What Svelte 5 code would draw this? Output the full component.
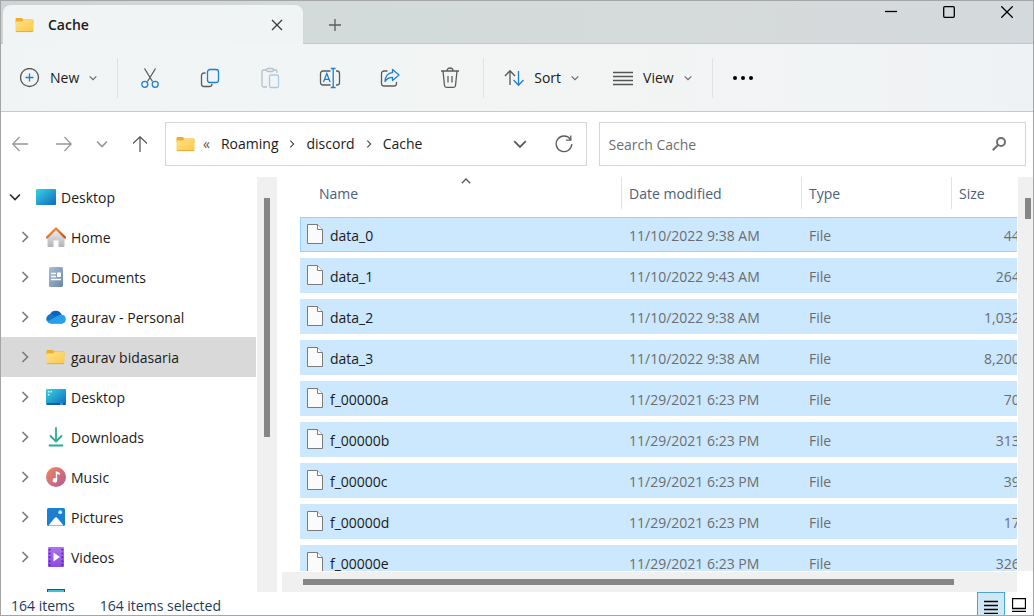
<script lang="ts">
  interface TreeItem {
    label: string
    icon: string
    selected?: boolean
  }

  interface FileEntry {
    name: string
    modified: string
    size: string
  }

  const children: TreeItem[] = [
    { label: 'Home', icon: 'home' },
    { label: 'Documents', icon: 'documents' },
    { label: 'gaurav - Personal', icon: 'cloud' },
    { label: 'gaurav bidasaria', icon: 'folder', selected: true },
    { label: 'Desktop', icon: 'desktop' },
    { label: 'Downloads', icon: 'downloads' },
    { label: 'Music', icon: 'music' },
    { label: 'Pictures', icon: 'pictures' },
    { label: 'Videos', icon: 'videos' },
  ]

  const files: FileEntry[] = [
    { name: 'data_0', modified: '11/10/2022 9:38 AM', size: '44 KB' },
    { name: 'data_1', modified: '11/10/2022 9:43 AM', size: '264 KB' },
    { name: 'data_2', modified: '11/10/2022 9:38 AM', size: '1,032 KB' },
    { name: 'data_3', modified: '11/10/2022 9:38 AM', size: '8,200 KB' },
    { name: 'f_00000a', modified: '11/29/2021 6:23 PM', size: '70 KB' },
    { name: 'f_00000b', modified: '11/29/2021 6:23 PM', size: '313 KB' },
    { name: 'f_00000c', modified: '11/29/2021 6:23 PM', size: '39 KB' },
    { name: 'f_00000d', modified: '11/29/2021 6:23 PM', size: '17 KB' },
    { name: 'f_00000e', modified: '11/29/2021 6:23 PM', size: '326 KB' },
  ]

  const path = ['Roaming', 'discord', 'Cache']

  let search = $state('')
  let focused = $state('data_0')
</script>

{#snippet folder()}
  <svg width="20" height="20" viewBox="0 0 20 20" aria-hidden="true">
    <defs>
      <linearGradient id="folder-front" x1="0" y1="0" x2="1" y2="1">
        <stop offset="0" stop-color="#ffe08a" />
        <stop offset="1" stop-color="#fbc944" />
      </linearGradient>
    </defs>
    <path d="M.5 4a1 1 0 0 1 1-1h5.200l1.800 1.500h9a1 1 0 0 1 1 1v3H.5z" fill="#eeb02b" />
    <path d="M.5 6.500h6.500L8.500 5h9a1 1 0 0 1 1 1v10a1 1 0 0 1-1 1h-16a1 1 0 0 1-1-1z" fill="url(#folder-front)" />
    <path d="M1 16.600h17" stroke="#e0a42c" stroke-width="0.800" />
  </svg>
{/snippet}

{#snippet chevronDown(size: number)}
  <svg width={size} height={size} viewBox="0 0 12 12" aria-hidden="true">
    <path d="M1 3.500l5 5 5-5" class="line chevron" />
  </svg>
{/snippet}

{#snippet chevronRight(size: number)}
  <svg width={size} height={size} viewBox="0 0 12 12" aria-hidden="true">
    <path d="M3.500 1l5 5-5 5" class="line chevron" />
  </svg>
{/snippet}

{#snippet treeIcon(name: string)}
  {#if name === 'folder'}
    {@render folder()}
  {:else}
    <svg width="20" height="20" viewBox="0 0 20 20" aria-hidden="true">
      {#if name === 'root' || name === 'desktop'}
        <defs>
          <linearGradient id="screen" x1="0" y1="0" x2="1" y2="1">
            <stop offset="0" stop-color="#35d5e2" />
            <stop offset="1" stop-color="#1268bd" />
          </linearGradient>
        </defs>
        <rect x="0" y="2" width="20" height="16" rx="1" fill="url(#screen)" />
        {#if name === 'desktop'}
          <path d="M2 4h1.500v1.500H2zM2 7h1.500v1.500H2zM4.500 4H6v1.500H4.500z" fill="#dcfbff" />
          <path d="M1 17h18" stroke="#0d4f93" stroke-width="1.500" />
          <path d="M14 17h3" stroke="#7fd3f5" />
        {/if}
      {:else if name === 'home'}
        <defs>
          <linearGradient id="wall" x1="0" y1="0" x2="0" y2="1">
            <stop offset="0" stop-color="#ececec" />
            <stop offset="1" stop-color="#b4b4b8" />
          </linearGradient>
          <linearGradient id="roof" x1="0" y1="0" x2="1" y2="1">
            <stop offset="0" stop-color="#f49b3c" />
            <stop offset="1" stop-color="#c94a1b" />
          </linearGradient>
        </defs>
        <path d="M10 3l8.500 8v8a1 1 0 0 1-1 1h-5v-6.500h-5V20h-5a1 1 0 0 1-1-1v-8z" fill="url(#wall)" />
        <path d="M1 10.500l9-9 9 9" fill="none" stroke="url(#roof)" stroke-width="2.400" stroke-linecap="round" stroke-linejoin="round" />
      {:else if name === 'documents'}
        <defs>
          <linearGradient id="paper" x1="0" y1="0" x2="1" y2="1">
            <stop offset="0" stop-color="#a9bdd4" />
            <stop offset="1" stop-color="#6c88a9" />
          </linearGradient>
        </defs>
        <rect x="3" y="0" width="14" height="20" rx="1.500" fill="url(#paper)" />
        <path d="M5 6.500h5M5 9.500h5M5 12.500h10" stroke="#fff" stroke-width="1.300" />
        <path d="M11 5.500h4V10h-4z" fill="#fff" />
      {:else if name === 'cloud'}
        <path d="M5.500 16.500A5 5 0 0 1 4 7.200 6.500 6.500 0 0 1 15.800 8 4.400 4.400 0 0 1 16 16.500z" fill="#0f63b8" />
        <path d="M4 7.200A5 5 0 0 0 .8 14.200L10 9 6.500 7.400A5 5 0 0 0 4 7.200z" fill="#1476cf" />
        <path d="M1 14.500L10.200 9.500l3-1.500a4.300 4.300 0 0 1 2.800-.2 4.400 4.400 0 0 1 0 8.700h-11A4.800 4.800 0 0 1 1 14.500z" fill="#27a0ea" />
      {:else if name === 'downloads'}
        <path d="M10 1v13M4.500 9l5.500 5.500L15.500 9M3.500 18.500h13" fill="none" stroke="#2bab90" stroke-width="1.800" stroke-linecap="round" stroke-linejoin="round" />
      {:else if name === 'music'}
        <defs>
          <linearGradient id="disc" x1="0" y1="0" x2="1" y2="1">
            <stop offset="0" stop-color="#f08a5a" />
            <stop offset="1" stop-color="#b2569a" />
          </linearGradient>
        </defs>
        <circle cx="10" cy="10" r="10" fill="url(#disc)" />
        <path d="M9.800 4l4 1.800V8l-2.600-1.200v6.400a2.300 2.300 0 1 1-1.400-2z" fill="#fff" />
      {:else if name === 'pictures'}
        <rect x="1" y="1" width="18" height="18" rx="1.500" fill="#1b80d2" />
        <path d="M2.500 18.500L8.600 11a1.800 1.800 0 0 1 2.800 0l6.100 7.500z" fill="#fff" />
        <circle cx="14.200" cy="5.200" r="1.900" fill="#c9ecff" />
      {:else if name === 'videos'}
        <defs>
          <linearGradient id="film" x1="0" y1="0" x2="0" y2="1">
            <stop offset="0" stop-color="#b070ee" />
            <stop offset="1" stop-color="#8a4be4" />
          </linearGradient>
        </defs>
        <rect x="2" y="0" width="16" height="20" rx="1" fill="url(#film)" />
        <path d="M3.700 2v17M16.300 2v17" stroke="#4b1c96" stroke-width="1.500" stroke-dasharray="1.500 2.300" />
        <path d="M7.500 5.500v9l6.500-4.500z" fill="#fff" />
      {/if}
    </svg>
  {/if}
{/snippet}

<div class="window">
  <header class="titlebar">
    <div class="tab">
      {@render folder()}
      <span class="tab-title">Cache</span>
      <button class="icon-button" aria-label="Close tab">
        <svg width="12" height="12" viewBox="0 0 12 12"><path d="M1 1l10 10M11 1L1 11" class="line" /></svg>
      </button>
    </div>
    <button class="icon-button new-tab" aria-label="New tab">
      <svg width="12" height="12" viewBox="0 0 12 12"><path d="M6 0v12M0 6h12" class="line" /></svg>
    </button>
    <div class="window-controls">
      <button class="icon-button" aria-label="Minimize">
        <svg width="12" height="12" viewBox="0 0 12 12"><path d="M0 5.500h12" class="line" /></svg>
      </button>
      <button class="icon-button" aria-label="Maximize">
        <svg width="12" height="12" viewBox="0 0 12 12"><rect x=".7" y=".7" width="10.600" height="10.600" rx="1" class="line" /></svg>
      </button>
      <button class="icon-button" aria-label="Close">
        <svg width="12" height="12" viewBox="0 0 12 12"><path d="M.3.300l11.400 11.400M11.700.3L.3 11.700" class="line" /></svg>
      </button>
    </div>
  </header>

  <div class="toolbar" role="toolbar" aria-label="Commands">
    <button class="command">
      <svg width="20" height="20" viewBox="0 0 20 20">
        <circle cx="9.500" cy="9.500" r="9" class="line" />
        <path d="M9.500 5.500v8M5.500 9.500h8" class="line blue" />
      </svg>
      New
      {@render chevronDown(8)}
    </button>
    <span class="separator"></span>
    <div class="actions">
      <button class="icon-button" aria-label="Cut">
        <svg width="20" height="22" viewBox="0 0 20 22">
          <path d="M4.500 1.500l8 13M15.500 1.500l-8 13" class="line" />
          <circle cx="4.800" cy="17.300" r="3" class="line blue" />
          <circle cx="15.200" cy="17.300" r="3" class="line blue" />
        </svg>
      </button>
      <button class="icon-button" aria-label="Copy">
        <svg width="20" height="20" viewBox="0 0 20 20">
          <path d="M5.500 5H4a2.500 2.500 0 0 0-2.500 2.500V16A2.500 2.500 0 0 0 4 18.500h5.500A2.500 2.500 0 0 0 12 16" class="line" />
          <rect x="7.500" y="1.500" width="11" height="13" rx="2.500" class="line blue" />
        </svg>
      </button>
      <button class="icon-button disabled" aria-label="Paste" disabled>
        <svg width="20" height="22" viewBox="0 0 20 22">
          <path d="M7 3H3.500A1.500 1.500 0 0 0 2 4.500v14A1.500 1.500 0 0 0 3.500 20H7M13 3h2.500A1.500 1.500 0 0 1 17 4.500V6" class="line" />
          <rect x="6.500" y="1.500" width="7" height="3" rx="1.500" class="line" />
          <rect x="9.500" y="8" width="9" height="12.500" rx="1.500" class="line blue" />
        </svg>
      </button>
      <button class="icon-button" aria-label="Rename">
        <svg width="22" height="22" viewBox="0 0 22 22">
          <path d="M11.500 4H4a2.500 2.500 0 0 0-2.500 2.500v9A2.500 2.500 0 0 0 4 18h7.500M17 4h1a2.500 2.500 0 0 1 2.500 2.500v9A2.500 2.500 0 0 1 18 18h-1" class="line" />
          <path d="M14.200 1.500v19M11.800 1.500h4.800M11.800 20.500h4.800" class="line blue" />
          <path d="M4.500 15l3.300-8.500L11.100 15M5.600 12.300H10" class="line blue" />
        </svg>
      </button>
      <button class="icon-button" aria-label="Share">
        <svg width="20" height="20" viewBox="0 0 20 20">
          <path d="M7.500 3H4a2.500 2.500 0 0 0-2.500 2.500v10A2.500 2.500 0 0 0 4 18h10a2.500 2.500 0 0 0 2.500-2.500V14" class="line" />
          <path d="M12.500 1.500L19 7l-6.500 5.500V9.300C9 9.300 7 10.500 5 13.500c.3-5 3-8.500 7.500-8.900z" class="line blue" stroke-linejoin="round" />
        </svg>
      </button>
      <button class="icon-button" aria-label="Delete">
        <svg width="20" height="22" viewBox="0 0 20 22">
          <path d="M1 4h18M3 4l1.500 14.500A2 2 0 0 0 6.500 20.300h7a2 2 0 0 0 2-1.800L17 4M7 4c0-4 6-4 6 0M8 9v6.500M12 9v6.500" class="line" />
        </svg>
      </button>
    </div>
    <span class="separator"></span>
    <button class="command">
      <svg width="20" height="20" viewBox="0 0 20 20">
        <path d="M6 17V3M1 8l5-5.200L11 8" class="line" />
        <path d="M14.500 3v14M9.500 12l5 5.200 5-5.200" class="line blue" />
      </svg>
      Sort
      {@render chevronDown(8)}
    </button>
    <button class="command view">
      <svg width="20" height="20" viewBox="0 0 20 20"><path d="M0 4.500h20M0 8.500h20M0 12.500h20M0 16.500h20" class="line" /></svg>
      View
      {@render chevronDown(8)}
    </button>
    <span class="separator"></span>
    <button class="icon-button more" aria-label="See more">
      <svg width="20" height="4" viewBox="0 0 20 4">
        <circle cx="2" cy="2" r="2" /><circle cx="10" cy="2" r="2" /><circle cx="18" cy="2" r="2" />
      </svg>
    </button>
  </div>

  <div class="navbar">
    <div class="history">
      <button class="icon-button faded" aria-label="Back">
        <svg width="16" height="16" viewBox="0 0 16 16"><path d="M16 8H1M7.500 1L.8 8l6.700 7" class="line" /></svg>
      </button>
      <button class="icon-button faded forward" aria-label="Forward">
        <svg width="16" height="16" viewBox="0 0 16 16"><path d="M0 8h15M8.500 1l6.700 7-6.700 7" class="line" /></svg>
      </button>
      <button class="icon-button faded" aria-label="Recent locations">{@render chevronDown(12)}</button>
      <button class="icon-button" aria-label="Up">
        <svg width="16" height="16" viewBox="0 0 16 16"><path d="M8 16V1M1 7.500L8 .8l7 6.700" class="line" /></svg>
      </button>
    </div>
    <div class="address">
      {@render folder()}
      <span class="overflow">«</span>
      {#each path as part, i}
        {#if i > 0}
          <span class="crumb-arrow">{@render chevronRight(8)}</span>
        {/if}
        <a href="#{part}">{part}</a>
      {/each}
      <div class="address-tools">
        <button class="icon-button" aria-label="Previous locations">{@render chevronDown(14)}</button>
        <button class="icon-button" aria-label="Refresh">
          <svg width="18" height="18" viewBox="0 0 18 18"><path d="M15.500 4.500A7.800 7.800 0 1 0 16.800 9M15.800.5v4.700h-4.700" class="line" /></svg>
        </button>
      </div>
    </div>
    <label class="search">
      <input type="text" placeholder="Search Cache" aria-label="Search Cache" bind:value={search} />
      <svg width="14" height="14" viewBox="0 0 14 14" aria-hidden="true">
        <circle cx="9" cy="5" r="4" class="line" />
        <path d="M6 8l-5.200 5.200" class="line" />
      </svg>
    </label>
  </div>

  <div class="body">
    <nav class="sidebar" aria-label="Folders">
      <ul>
        <li class="root">
          <button class="icon-button" aria-label="Collapse Desktop">{@render chevronDown(12)}</button>
          <a href="#desktop">{@render treeIcon('root')}Desktop</a>
        </li>
        {#each children as item}
          <li class:selected={item.selected}>
            <button class="icon-button" aria-label="Expand {item.label}">{@render chevronRight(12)}</button>
            <a href="#{item.icon}">{@render treeIcon(item.icon)}{item.label}</a>
          </li>
        {/each}
        <li class="partial">
          <svg width="18" height="20" viewBox="0 0 18 20" aria-hidden="true">
            <rect x=".5" y="2.500" width="17" height="14" fill="#3fc0d6" stroke="#2d5560" />
          </svg>
        </li>
      </ul>
    </nav>
    <div class="scroll-y sidebar-scroll"><div class="thumb"></div></div>

    <main>
      <div class="pane">
        <div class="list">
          <table>
            <thead>
              <tr>
                <th scope="col">
                  Name
                  <svg class="sort-mark" width="10" height="6" viewBox="0 0 10 6" aria-hidden="true"><path d="M.8 5.200L5 1l4.200 4.200" class="line" /></svg>
                </th>
                <th scope="col">Date modified</th>
                <th scope="col">Type</th>
                <th scope="col">Size</th>
              </tr>
            </thead>
            <tbody>
              {#each files as file}
                <tr class:focused={file.name === focused} onclick={() => (focused = file.name)}>
                  <td class="name">
                    <svg width="16" height="20" viewBox="0 0 16 20" aria-hidden="true">
                      <path d="M.5.500h10l5 5v14H.5z" fill="#fbfbfb" stroke="#7b7b7b" />
                      <path d="M10.500.500v5h5" fill="#fff" stroke="#7b7b7b" />
                    </svg>
                    {file.name}
                  </td>
                  <td>{file.modified}</td>
                  <td>File</td>
                  <td class="size">{file.size}</td>
                </tr>
              {/each}
            </tbody>
          </table>
        </div>
        <div class="scroll-y list-scroll"><div class="thumb"></div></div>
      </div>
      <div class="scroll-x"><div class="thumb"></div></div>
    </main>
  </div>

  <footer class="statusbar">
    <span>164 items</span>
    <span>164 items selected</span>
    <div class="layouts">
      <button class="layout active" aria-label="Details">
        <svg width="14" height="14" viewBox="0 0 14 14"><path d="M0 1.500h14M0 5.500h14M0 9.500h14M0 13.500h14" class="line" /></svg>
      </button>
      <button class="layout" aria-label="Large icons">
        <svg width="14" height="14" viewBox="0 0 14 14"><path d="M.5.500h13v10H.5zM0 13.500h14" class="line" /></svg>
      </button>
    </div>
  </footer>
</div>

<style>
  :global(body) {
    margin: 0;
  }

  .window {
    box-sizing: border-box;
    display: flex;
    flex-direction: column;
    height: 100vh;
    overflow: hidden;
    border: 1px solid #a3a5a6;
    background: #fff;
    color: #1b1b1b;
    font-family: 'Open Sans', 'Noto Sans', sans-serif;
    font-size: 14px;
    line-height: 20px;
  }

  .window :global(*) {
    box-sizing: border-box;
  }

  svg {
    flex: none;
    display: block;
  }

  button {
    padding: 0;
    border: 0;
    background: none;
    color: inherit;
    font: inherit;
  }

  a {
    color: inherit;
    text-decoration: none;
  }

  .line {
    fill: none;
    stroke: currentColor;
    stroke-width: 1.3;
  }

  .chevron {
    stroke-width: 1.6;
  }

  .blue {
    stroke: #1b7fd4;
  }

  .icon-button {
    display: flex;
    align-items: center;
    justify-content: center;
    width: 20px;
    height: 20px;
    color: #5c5c5c;
  }

  .titlebar {
    flex: none;
    display: flex;
    height: 43px;
    border-bottom: 1px solid #c2c9c9;
    background: linear-gradient(90deg, #d0d3d6, #d3dbda 35%, #d6dada 70%, #d4d9dd);
  }

  .tab {
    display: flex;
    align-items: center;
    width: 300px;
    height: 39px;
    margin: 4px 0 0 2px;
    padding: 0 16px 0 12px;
    border-radius: 8px 8px 0 0;
    background: #f1f4f5;
  }

  .tab-title {
    flex: 1;
    margin-left: 13px;
    font-weight: 600;
  }

  .tab .icon-button {
    color: #3b3b3b;
  }

  .new-tab {
    margin: 14px 0 0 22px;
  }

  .window-controls {
    display: flex;
    gap: 38px;
    margin: 1px 16px 0 auto;
  }

  .window-controls .icon-button {
    color: #000;
  }

  .toolbar {
    flex: none;
    display: flex;
    align-items: center;
    height: 68px;
    padding-left: 19px;
    border-bottom: 1px solid #c6c9ca;
    background: linear-gradient(90deg, #f1f4f5, #f2f5f5 35%, #f2f4f4 65%, #eff2f5);
  }

  .command {
    display: flex;
    align-items: center;
    gap: 10px;
  }

  .command svg:first-child {
    color: #555;
  }

  .command svg:last-child {
    color: #666;
  }

  .view {
    margin-left: 34px;
  }

  .separator {
    width: 1px;
    height: 40px;
    margin: 0 20px;
    background: #e0e3e4;
  }

  .actions {
    display: flex;
    margin: 0 -17px 0 -18px;
  }

  .actions .icon-button {
    width: 60px;
    height: 40px;
  }

  .disabled {
    opacity: 0.35;
  }

  .more {
    fill: #000;
  }

  .navbar {
    flex: none;
    display: flex;
    align-items: center;
    height: 65px;
    padding: 0 7px 2px 9px;
  }

  .history {
    display: flex;
    gap: 18px;
    margin-right: 15px;
  }

  .faded {
    color: #969696;
  }

  .forward {
    margin-left: 6px;
  }

  .address,
  .search {
    flex: 1;
    display: flex;
    align-items: center;
    min-width: 0;
    height: 44px;
    border: 1px solid #d6d6d6;
    background: #fff;
  }

  .address {
    margin-right: 12px;
    padding: 0 12px 0 10px;
  }

  .overflow {
    margin: 0 11px 0 7px;
    color: #555;
  }

  .crumb-arrow {
    margin: 0 10px;
    color: #444;
  }

  .address-tools {
    display: flex;
    gap: 24px;
    margin-left: auto;
  }

  .search {
    padding: 0 19px 0 9px;
    color: #6e6e6e;
  }

  .search .line {
    stroke-width: 2;
  }

  .search input {
    flex: 1;
    min-width: 0;
    padding: 2px 0 0;
    border: 0;
    outline: 0;
    background: none;
    color: inherit;
    font: inherit;
  }

  .search input::placeholder {
    color: #6e6e6e;
    opacity: 1;
  }

  .body {
    flex: 1;
    display: flex;
    min-height: 0;
  }

  .sidebar {
    width: 255px;
    overflow: hidden;
  }

  ul {
    margin: 0;
    padding: 0;
    list-style: none;
  }

  li {
    display: flex;
    align-items: center;
    gap: 11px;
    height: 40px;
    padding-left: 14px;
  }

  li a {
    display: flex;
    align-items: center;
    gap: 5px;
    padding-top: 2px;
  }

  li a :global(svg) {
    margin-bottom: 2px;
  }

  li .icon-button {
    color: #7a7a7a;
  }

  li.root {
    padding-left: 4px;
  }

  li.root .icon-button {
    color: #2b2b2b;
  }

  li.selected {
    background: #d9d9d9;
  }

  li.partial {
    padding-left: 46px;
  }

  .scroll-y,
  .scroll-x {
    flex: none;
    background: #f0f0f0;
  }

  .thumb {
    background: #868686;
  }

  .sidebar-scroll {
    width: 20px;
    margin-left: 1px;
    padding: 21px 7px;
  }

  .sidebar-scroll .thumb {
    height: 64%;
  }

  main {
    flex: 1;
    display: flex;
    flex-direction: column;
    min-width: 0;
    margin-left: 5px;
  }

  .pane {
    flex: 1;
    display: flex;
    min-height: 0;
  }

  .list {
    flex: 1;
    min-width: 0;
    padding-left: 18px;
    overflow: hidden;
  }

  .list-scroll {
    width: 15px;
    margin-left: 1px;
    padding: 21px 2px 0 7px;
  }

  .list-scroll .thumb {
    height: 21px;
  }

  .scroll-x {
    height: 20px;
    margin: 1px 16px 0 0;
    padding: 7px 21px;
  }

  .scroll-x .thumb {
    width: 94%;
    height: 6px;
  }

  table,
  thead,
  tbody {
    display: block;
  }

  tr {
    display: grid;
    grid-template-columns: 321px 180px 150px 100px;
    width: 751px;
  }

  th {
    position: relative;
    height: 32px;
    padding: 7px 0 0 7px;
    border-left: 1px solid #e2e2e2;
    color: #4c607a;
    font-weight: 400;
    text-align: left;
  }

  th:first-child {
    padding-left: 18px;
    border-color: transparent;
  }

  .sort-mark {
    position: absolute;
    top: 1px;
    left: 50%;
    color: #555;
  }

  tbody tr {
    height: 35px;
    margin-top: 6px;
    align-items: center;
    background: #cce8ff;
  }

  tbody tr:first-child {
    margin-top: 8px;
  }

  tr.focused {
    outline: 1px solid #99d1ff;
    outline-offset: -1px;
  }

  td {
    padding: 2px 8px 0;
    color: #6d6d6d;
  }

  td.name {
    display: flex;
    align-items: center;
    gap: 7px;
    padding-left: 7px;
    color: #1b1b1b;
  }

  td.name svg {
    margin-bottom: 4px;
  }

  td.size {
    padding-right: 10px;
    text-align: right;
  }

  .statusbar {
    flex: none;
    display: flex;
    align-items: center;
    gap: 25px;
    height: 23px;
    padding-left: 10px;
    color: #1e395b;
  }

  .statusbar span {
    padding-top: 5px;
  }

  .layouts {
    display: flex;
    align-self: stretch;
    margin-left: auto;
  }

  .layout {
    display: flex;
    align-items: flex-end;
    justify-content: center;
    width: 28px;
    padding-bottom: 3px;
    color: #000;
  }

  .layout.active {
    padding-bottom: 1px;
    border: 1px solid #4aa5d8;
    border-bottom: 0;
    background: #cfe8f6;
  }
</style>
